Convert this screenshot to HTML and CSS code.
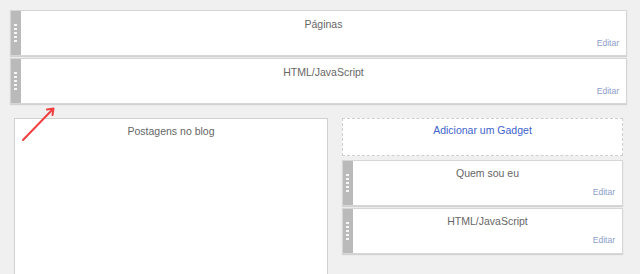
FILE: index.html
```html
<!DOCTYPE html>
<html>
<head lang="pt">
    <meta charset="UTF-8">
    <title>Layout</title>
    <link rel="stylesheet" href="styles.css">
</head>
<body>

<div id="page">
    <div class="widget">
        <div class="handle"><span class="grip"></span></div>
        <div class="widget-body">
            <div class="title">Páginas</div>
            <a class="edit">Editar</a>
        </div>
    </div>
    <div class="widget">
        <div class="handle"><span class="grip"></span></div>
        <div class="widget-body">
            <div class="title">HTML/JavaScript</div>
            <a class="edit">Editar</a>
        </div>
    </div>

    <div id="columns">
        <div id="main">
            <div class="posts">Postagens no blog</div>
        </div>
        <div id="sidebar">
            <div class="add-gadget"><a>Adicionar um Gadget</a></div>
            <div class="widget">
                <div class="handle"><span class="grip"></span></div>
                <div class="widget-body">
                    <div class="title">Quem sou eu</div>
                    <a class="edit">Editar</a>
                </div>
            </div>
            <div class="widget">
                <div class="handle"><span class="grip"></span></div>
                <div class="widget-body">
                    <div class="title">HTML/JavaScript</div>
                    <a class="edit">Editar</a>
                </div>
            </div>
        </div>
    </div>

    <svg class="arrow" width="44" height="42" viewBox="0 0 44 42">
        <line x1="4" y1="35" x2="34" y2="4" stroke="#f0403f" stroke-width="2" stroke-linecap="round"/>
        <polyline points="28,4.5 34.5,3.5 33.5,10" fill="none" stroke="#f0403f" stroke-width="2" stroke-linecap="round" stroke-linejoin="round"/>
    </svg>
</div>

</body>
</html>
```

FILE: styles.css
```css
* {
    margin: 0;
    padding: 0;
    box-sizing: border-box;
}

html, body {
    background: #f0f0f0;
}

body {
    font-family: "Liberation Sans", Arial, sans-serif;
    overflow: hidden;
}

#page {
    position: relative;
    padding: 10px 13px 0 10px;
}

.widget {
    display: flex;
    height: 46px;
    margin-bottom: 2px;
    background: #fff;
    border: 1px solid #d6d6d6;
    box-shadow: 0 1px 1px rgba(0, 0, 0, 0.12);
}

.handle {
    width: 10px;
    background: #bababa;
    display: flex;
    align-items: center;
    padding-left: 3px;
}

.grip {
    display: block;
    width: 3px;
    height: 18px;
    background: repeating-linear-gradient(#f6f6f6 0 2px, transparent 2px 4px);
}

.widget-body {
    flex: 1;
    display: flex;
    flex-direction: column;
    padding: 7px 7px 7px 7px;
}

.title {
    text-align: center;
    font-size: 10.5px;
    line-height: 12px;
    color: #666;
}

.edit {
    margin-top: auto;
    align-self: flex-end;
    font-size: 8.5px;
    line-height: 10px;
    color: #8b9dcb;
    cursor: pointer;
}

#columns {
    display: grid;
    grid-template-columns: 314px 281px;
    column-gap: 14px;
    margin: 14px 4px 0 4px;
}

.posts {
    height: 156px;
    background: #fff;
    border: 1px solid #d2d2d2;
    border-bottom: none;
    text-align: center;
    font-size: 10.5px;
    line-height: 12px;
    color: #666;
    padding-top: 6px;
}

.add-gadget {
    height: 38px;
    margin-bottom: 4px;
    background: #fff;
    border: 1px dashed #cfcfcf;
    text-align: center;
    font-size: 10.5px;
    line-height: 12px;
    padding-top: 5px;
}

.add-gadget a {
    color: #3d63cc;
    cursor: pointer;
}

#sidebar .widget .widget-body {
    padding-top: 6px;
    padding-bottom: 8px;
}

.arrow {
    position: absolute;
    left: 19px;
    top: 105px;
}
```
